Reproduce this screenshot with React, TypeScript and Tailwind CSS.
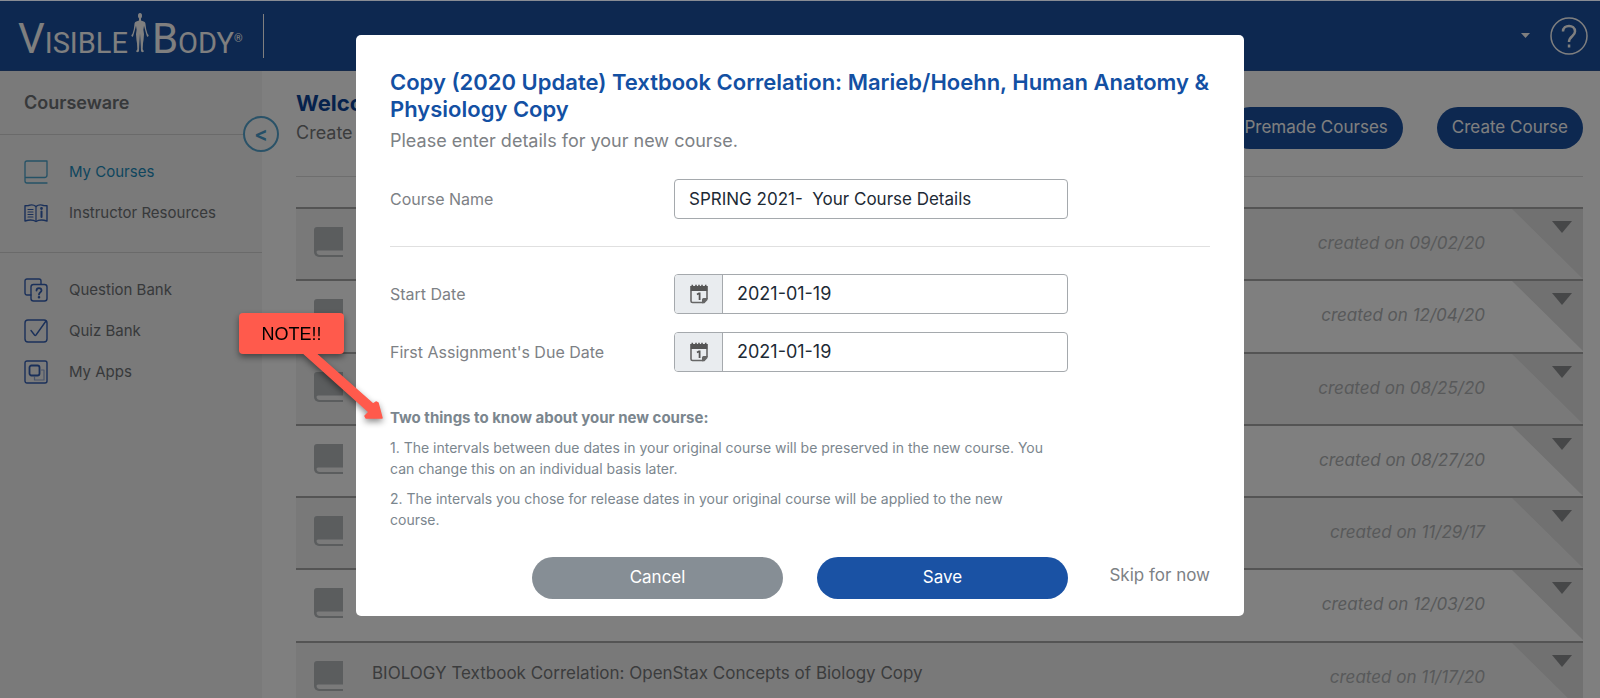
import { useState } from 'react';

const courses = [
  { name: '', created: '09/02/20' },
  { name: '', created: '12/04/20' },
  { name: '', created: '08/25/20' },
  { name: '', created: '08/27/20' },
  { name: '', created: '11/29/17' },
  { name: '', created: '12/03/20' },
  { name: 'BIOLOGY Textbook Correlation: OpenStax Concepts of Biology Copy', created: '11/17/20' },
];

const iconProps = {
  className: 'w-6 h-6 shrink-0',
  viewBox: '0 0 24 24',
  fill: 'none',
  stroke: '#3560b4',
  strokeWidth: 1.4,
  strokeLinecap: 'round' as const,
  strokeLinejoin: 'round' as const,
};

const CoursesIcon = () => (
  <svg {...iconProps} stroke="#4ba4cc" strokeWidth={1.3}>
    <path d="M1 20V3A2 2 0 0 1 3 1H23v14a2.500 2.500 0 0 1-2.500 2.500H1M1 17.500V21a2 2 0 0 0 2 2h20" />
  </svg>
);

const ResourcesIcon = () => (
  <svg {...iconProps}>
    <path d="M12 5.500C9.500 3.500 7 3.500 4.500 4.500L1 4.700V20c2.500-.8 3.500-1 5.500-1s4 .5 5.500 1.500c1.500-1 3.500-1.500 5.500-1.500s3 .2 5.500 1V4.700L19.500 4.500C17 3.500 14.500 3.500 12 5.500z" />
    <path d="M12 5.500v15M4 8.500h5M4 11h5M4 13.500h5M4 16h5" strokeWidth={1.2} />
    <path d="M17.500 10.500v5.500" strokeWidth={2} />
    <circle cx="17.500" cy="7.500" r="0.700" />
  </svg>
);

const QuestionIcon = () => (
  <svg {...iconProps}>
    <path d="M7 17H3a2 2 0 0 1-2-2V3a2 2 0 0 1 2-2h12a2 2 0 0 1 2 2v3" />
    <rect x="7" y="6.500" width="16" height="16.500" rx="2.500" />
    <path d="M12.500 12.500c0-3.300 5-3.300 5 0 0 1.800-2.500 1.800-2.500 4" strokeWidth={1.8} />
    <circle cx="15" cy="19.300" r="0.600" />
  </svg>
);

const QuizIcon = () => (
  <svg {...iconProps}>
    <rect x="1" y="1" width="22" height="22" rx="3" />
    <path d="M7 11.500l3.500 4.500c.5.600 1 .6 1.500 0L22 2" />
  </svg>
);

const AppsIcon = () => (
  <svg {...iconProps}>
    <rect x="1" y="1" width="22" height="22" rx="2" />
    <path d="M17.500 10H20v10H10.500v-3" strokeWidth={1.2} opacity={0.5} />
    <rect x="5.500" y="5.500" width="10" height="10" rx="2" strokeWidth={1.800} />
  </svg>
);

const BookIcon = () => (
  <svg className="w-[30px] h-[30px] mt-[18px] shrink-0" viewBox="0 0 30 30">
    <path d="M3 0h26v30H5a5 5 0 0 1-5-5V3a3 3 0 0 1 3-3z" fill="#b6babd" />
    <path d="M4.500 23.500H29v4.500H6a3.500 3.500 0 0 1-3.500-3c0-1 1-1.500 2-1.500z" fill="#f4f4f4" />
  </svg>
);

const CalendarIcon = () => (
  <svg className="w-5 h-5" viewBox="0 0 20 20">
    <path d="M2 7v10a1.500 1.500 0 0 0 1.500 1.500H14l4-4V7" fill="none" stroke="#666" strokeWidth="1.600" />
    <path d="M18.500 14v2l-3 3.200h-2.500V15.500a1.500 1.500 0 0 1 1.500-1.500z" fill="#666" />
    <path d="M1.200 2h1.300V.8h1.600V2h2.100V.8h1.600V2h1.400V.8h1.600V2h1.400V.8h1.600V2h2.100V.8h1.600V2h1.300v5H1.200z" fill="#555" />
    <path d="M8 10.500l2-1.200h.6V16" fill="none" stroke="#555" strokeWidth="1.800" />
  </svg>
);

const Figure = () => (
  <svg className="w-[18px] h-10" viewBox="0 0 18 40" fill="#fff">
    <ellipse cx="9" cy="2.800" rx="2" ry="2.800" />
    <path d="M8 5h2v2.500l3.300 1.200c1 .5 1.200 1.500 1.300 3l.6 4.500 1.300 4.500 1.200 1.500-.8 1.800-1-.8-1.600-5.500-1.300-5-.6 4 .6 4.500-.5 6-.5 3-.3 6 1.300 2.300-1.800.8-1.200-1-.2-5-.3-5L9 20.500l-.5 7.800-.3 5-.2 5-1.200 1-1.800-.8 1.300-2.300-.3-6-.5-3-.5-6 .6-4.500-.6-4-1.300 5L2.100 23.200l-1 .8L.3 22.200l1.200-1.500 1.300-4.500.6-4.500c.1-1.500.3-2.500 1.300-3L8 7.500z" />
  </svg>
);

const Header = () => (
  <header className="h-[70px] shrink-0 pl-[18px] pr-3 bg-[#1a50a0] border-b border-[#2b5596] flex items-center justify-between">
    <div className="flex items-center font-[Roboto] text-white">
      <a href="#" className="pt-1.5 flex items-baseline text-[42px] leading-[42px]">
        <span>V<span className="text-[29px]">ISIBLE</span></span>
        <span className="px-[3px]"><Figure /></span>
        <span>B<span className="text-[29px]">ODY</span></span>
        <span className="self-center text-[11px] leading-4">®</span>
      </a>
      <div className="w-px h-11 ml-5 bg-white" />
    </div>
    <div className="flex items-center gap-4">
      <button type="button" aria-label="Account" className="p-1">
        <svg className="w-[9px] h-[5px]" viewBox="0 0 9 5" fill="#fff"><path d="M0 0h9L4.500 5z" /></svg>
      </button>
      <button type="button" aria-label="Help">
        <svg className="w-[38px] h-[38px]" viewBox="0 0 38 38" fill="none" stroke="#fff" strokeWidth="1.500">
          <circle cx="19" cy="19" r="18" />
          <path d="M13 14.500c0-7.500 12-7.500 12 0 0 5-6 4.500-6 10.500" strokeWidth="2.500" />
          <path d="M17.800 27.500h2.500v3h-2.500z" fill="#fff" stroke="none" />
        </svg>
      </button>
    </div>
  </header>
);

const Sidebar = () => (
  <aside className="relative w-[262px] shrink-0 bg-[#f4f4f4] text-[15px] leading-5 text-[#6f7376]">
    <h2 className="h-16 pl-6 flex items-center text-lg font-semibold border-b border-[#d4d4d4]">Courseware</h2>
    <button type="button" className="absolute -right-[17px] top-[45px] w-9 h-9 rounded-full border-2 border-[#55a5d0] bg-[#fafafa] text-xl leading-none font-bold text-[#4b9fcf]">
      &lt;
    </button>
    <nav>
      <ul className="h-[118px] pt-4 pl-6 border-b border-[#d4d4d4]">
        <li><a href="#" className="h-[41px] flex items-center gap-[21px] text-[#1c8dbd]"><CoursesIcon />My Courses</a></li>
        <li><a href="#" className="h-[41px] flex items-center gap-[21px]"><ResourcesIcon />Instructor Resources</a></li>
      </ul>
      <ul className="pt-4 pl-6">
        <li><a href="#" className="h-[41px] flex items-center gap-[21px]"><QuestionIcon />Question Bank</a></li>
        <li><a href="#" className="h-[41px] flex items-center gap-[21px]"><QuizIcon />Quiz Bank</a></li>
        <li><a href="#" className="h-[41px] flex items-center gap-[21px]"><AppsIcon />My Apps</a></li>
      </ul>
    </nav>
  </aside>
);

const CourseList = () => (
  <main className="flex-1 pl-[34px] pr-[17px]">
    <div className="h-[106px] flex justify-between border-b border-[#dcdcdc]">
      <div className="pt-[18px]">
        <h1 className="text-[22px] leading-7 font-bold text-[#0d4499]">Welcome</h1>
        <p className="text-lg leading-8 text-[#77797b]">Create</p>
      </div>
      <div className="pt-9 flex items-start gap-[34px]">
        <button type="button" className="h-[42px] px-[15px] rounded-full bg-[#1a50a0] text-white text-[17px]">Premade Courses</button>
        <button type="button" className="h-[42px] px-[15px] rounded-full bg-[#1a50a0] text-white text-[17px]">Create Course</button>
      </div>
    </div>
    <ul className="mt-[30px] h-[506px] grid grid-rows-7 text-[17px] leading-7">
      {courses.map((course) => (
        <li key={course.created} className="relative pl-[18px] pr-[98px] flex items-start border-t-2 border-[#a8a8a8] odd:bg-[#f3f3f3]">
          <BookIcon />
          <span className="ml-7 mt-4 flex-1 text-[#77797b]">{course.name}</span>
          <span className="mt-5 italic text-[#b0b3b5]">created on {course.created}</span>
          <button type="button" aria-label="Course menu" className="absolute right-0 top-0">
            <svg className="w-[71px] h-[70px]" viewBox="0 0 71 70">
              <path d="M0 0h71v70z" fill="#e2e2e2" />
              <path d="M40 12h20L50 24z" fill="#8c8e90" />
            </svg>
          </button>
        </li>
      ))}
    </ul>
  </main>
);

type DateFieldProps = { id: string; label: string; value: string; onChange: (value: string) => void };

const DateField = ({ id, label, value, onChange }: DateFieldProps) => (
  <div className="flex items-center">
    <label htmlFor={id} className="w-[284px]">{label}</label>
    <div className="w-[394px] h-10 flex border border-[#a5a9ad] rounded overflow-hidden">
      <span className="w-12 flex items-center justify-center bg-[#e9ecef] border-r border-[#a5a9ad]"><CalendarIcon /></span>
      <input id={id} type="text" value={value} onChange={e => onChange(e.target.value)} className="flex-1 px-3.5 text-lg text-[#1d2a35] outline-none" />
    </div>
  </div>
);

const CopyCourseDialog = () => {
  const [name, setName] = useState('SPRING 2021-\u00a0 Your Course Details')
  const [startDate, setStartDate] = useState('2021-01-19')
  const [dueDate, setDueDate] = useState('2021-01-19')

  return (
    <form
      role="dialog"
      onSubmit={e => e.preventDefault()}
      className="w-[888px] max-w-full px-[34px] pt-[34px] pb-[17px] bg-white rounded-[5px] text-base text-[#7d8185]"
    >
      <h2 className="text-[22px] leading-[27px] font-semibold text-[#1350a3]">
        Copy (2020 Update) Textbook Correlation: Marieb/Hoehn, Human Anatomy &amp; Physiology Copy
      </h2>
      <p className="mt-1 text-lg leading-7">Please enter details for your new course.</p>

      <div className="mt-6 pb-[27px] flex items-center border-b border-[#e0e0e0]">
        <label htmlFor="name" className="w-[284px]">Course Name</label>
        <input
          id="name"
          type="text"
          value={name}
          onChange={e => setName(e.target.value)}
          className="w-[394px] h-10 px-3.5 border border-[#a5a9ad] rounded text-[17px] text-[#1d2a35] outline-none" />
      </div>

      <div className="mt-[27px] flex flex-col gap-[18px]">
        <DateField id="start" label="Start Date" value={startDate} onChange={setStartDate} />
        <DateField id="due" label="First Assignment's Due Date" value={dueDate} onChange={setDueDate} />
      </div>

      <div className="mt-[35px] w-[660px] text-sm leading-[21px] text-[#7b868e]">
        <p className="text-[15px] leading-[21px] font-bold">Two things to know about your new course:</p>
        <p className="mt-[9px]">1. The intervals between due dates in your original course will be preserved in the new course. You can change this on an individual basis later.</p>
        <p className="mt-[9px]">2. The intervals you chose for release dates in your original course will be applied to the new course.</p>
      </div>

      <div className="mt-[27px] flex items-start justify-end text-[17px]">
        <button type="button" className="w-[251px] h-[42px] mr-[34px] rounded-full bg-[#868e95] text-white">Cancel</button>
        <button type="submit" className="w-[251px] h-[42px] rounded-full bg-[#1a52a4] text-white">Save</button>
        <a href="#" className="w-[142px] text-right leading-9">Skip for now</a>
      </div>
    </form>
  );
};

const Note = () => (
  <div className="absolute left-[239px] top-[312px] drop-shadow-[0_3px_3px_rgba(0,0,0,0.45)]">
    <svg className="absolute left-[60px] top-9 w-[86px] h-[72px]" viewBox="0 0 86 72" fill="#ff5a4c" stroke="#ff5a4c" strokeLinejoin="round">
      <path d="M2 2h12l60 53 3-2 2 1 4 15-16 0-1-2 4-4z" strokeWidth="1.500" />
    </svg>
    <div className="relative w-[105px] h-[41px] flex items-center justify-center rounded bg-[#ff5a4c] font-['Liberation_Sans'] text-lg text-black">
      NOTE!!
    </div>
  </div>
);

const App = () => {
  return (
    <div className="relative h-screen overflow-hidden flex flex-col bg-white border-t border-[#888c94] font-[Inter,sans-serif]">
      <Header />
      <div className="flex-1 flex">
        <Sidebar />
        <CourseList />
      </div>
      <div className="absolute inset-0 pt-[34px] flex items-start justify-center bg-black/50">
        <CopyCourseDialog />
        <Note />
      </div>
    </div>
  );
};

export default App;
